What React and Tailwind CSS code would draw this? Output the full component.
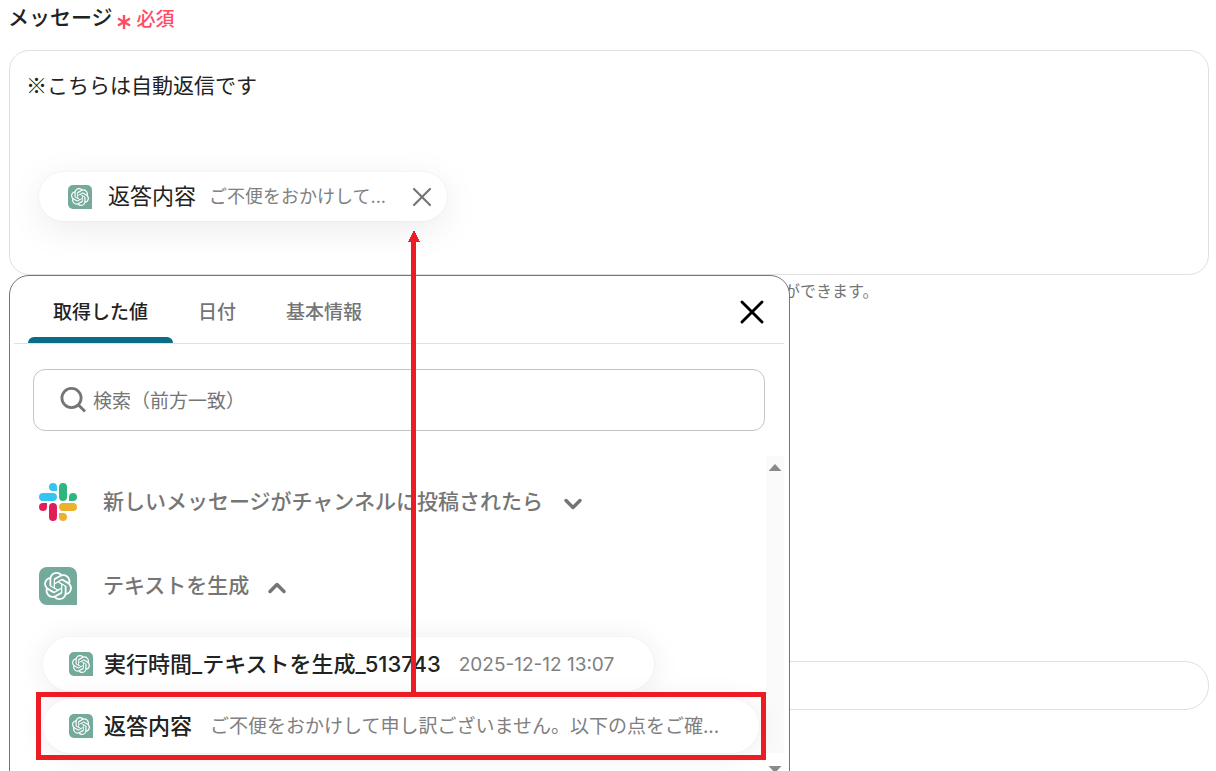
import { SiOpenai } from "react-icons/si";
import { ChevronDown, ChevronUp, X } from "lucide-react";

const tabs = ["取得した値", "日付", "基本情報"];

function OpenAiBadge({ large }) {
  return (
    <span
      className={
        large
          ? "flex size-[38px] shrink-0 items-center justify-center rounded-lg rounded-br-none bg-[#74aa9c] text-white"
          : "flex size-6 shrink-0 items-center justify-center rounded-[5px] rounded-br-none bg-[#74aa9c] text-white"
      }
    >
      <SiOpenai size={large ? 28 : 18} />
    </span>
  );
}

function SlackLogo() {
  return (
    <svg viewBox="0 0 24 24" className="size-[38px] shrink-0" aria-hidden="true">
      <path
        fill="#E01E5A"
        d="M5.042 15.165a2.528 2.528 0 0 1-2.52 2.523A2.528 2.528 0 0 1 0 15.165a2.527 2.527 0 0 1 2.522-2.52h2.52v2.52zM6.313 15.165a2.527 2.527 0 0 1 2.521-2.52 2.527 2.527 0 0 1 2.521 2.52v6.313A2.528 2.528 0 0 1 8.834 24a2.528 2.528 0 0 1-2.521-2.522v-6.313z"
      />
      <path
        fill="#36C5F0"
        d="M8.834 5.042a2.528 2.528 0 0 1-2.521-2.52A2.528 2.528 0 0 1 8.834 0a2.528 2.528 0 0 1 2.521 2.522v2.52H8.834zM8.834 6.313a2.528 2.528 0 0 1 2.521 2.521 2.528 2.528 0 0 1-2.521 2.521H2.522A2.528 2.528 0 0 1 0 8.834a2.528 2.528 0 0 1 2.522-2.521h6.312z"
      />
      <path
        fill="#2EB67D"
        d="M18.956 8.834a2.528 2.528 0 0 1 2.522-2.521A2.528 2.528 0 0 1 24 8.834a2.528 2.528 0 0 1-2.522 2.521h-2.522V8.834zM17.688 8.834a2.528 2.528 0 0 1-2.523 2.521 2.527 2.527 0 0 1-2.52-2.521V2.522A2.527 2.527 0 0 1 15.165 0a2.528 2.528 0 0 1 2.523 2.522v6.312z"
      />
      <path
        fill="#ECB22E"
        d="M15.165 18.956a2.528 2.528 0 0 1 2.523 2.522A2.528 2.528 0 0 1 15.165 24a2.527 2.527 0 0 1-2.52-2.522v-2.522h2.52zM15.165 17.688a2.527 2.527 0 0 1-2.52-2.523 2.526 2.526 0 0 1 2.52-2.52h6.313A2.527 2.527 0 0 1 24 15.165a2.528 2.528 0 0 1-2.522 2.523h-6.313z"
      />
    </svg>
  );
}

function OutputChip({ name, value }) {
  return (
    <button className="flex h-[54px] items-center rounded-full bg-white pr-10 pl-[26px] shadow-[0_2px_30px_rgba(0,0,0,0.08),0_0_2px_rgba(0,0,0,0.06)]">
      <OpenAiBadge />
      <span className="ml-[11px] text-[22px] font-medium text-[#222]">{name}</span>
      <span className="ml-[18px] pt-0.5 text-[19px] text-[#808080]">{value}</span>
    </button>
  );
}

// Red frame and arrow pointing from the picked value to the editor
function Callout() {
  return (
    <div className="pointer-events-none absolute -inset-[7px] border-5 border-[#ed1c24]">
      <svg
        viewBox="0 0 12 467"
        className="absolute bottom-full left-[367px] h-[467px] w-3"
        fill="#ed1c24"
        shapeRendering="crispEdges"
        aria-hidden="true"
      >
        <path d="M6 0 12 12H0z" />
        <path d="M3 11h5v456H3z" />
      </svg>
    </div>
  );
}

function ValuePicker() {
  return (
    <div className="absolute top-full left-[-1px] mt-px w-[781px] rounded-[20px] border border-[#757575] bg-white pr-[5px] pb-10 pl-1">
      <div className="flex h-[68px] items-stretch border-b border-[#e0e0e0] pl-[14px]">
        <div role="tablist" className="flex">
          {tabs.map((tab, i) => (
            <button
              key={tab}
              role="tab"
              aria-selected={i === 0}
              className={
                i === 0
                  ? "relative px-[25px] pt-2 text-[19px] font-medium text-[#222]"
                  : "px-[25px] pt-2 text-[19px] font-medium text-[#757575]"
              }
            >
              {tab}
              {i === 0 && (
                <span className="absolute inset-x-0 bottom-0 h-1.5 rounded-t-md bg-[#0a6c86]" />
              )}
            </button>
          ))}
        </div>
        <button aria-label="閉じる" className="mr-3 ml-auto pt-1 text-black">
          <X size={40} strokeWidth={1.7} />
        </button>
      </div>

      <label className="mx-[19px] mt-[25px] flex h-[62px] items-center rounded-xl border border-[#c4c4c4] pl-[26px]">
        <svg
          viewBox="0 0 26 26"
          className="size-[26px]"
          fill="none"
          stroke="#757575"
          strokeWidth="2.8"
          aria-hidden="true"
        >
          <circle cx="11.5" cy="11" r="9.6" />
          <path d="M18 17.5 25 24.5" />
        </svg>
        <input
          type="search"
          aria-label="検索"
          placeholder="検索（前方一致）"
          className="ml-[7px] flex-1 pt-1 text-[19px] outline-none placeholder:text-[#757575]"
        />
      </label>

      <div className="mt-[25px] flex">
        <div className="min-w-0 flex-1 pt-[27px] pl-[25px]">
          <button className="flex items-center text-[21px] font-medium text-[#757575]">
            <SlackLogo />
            <span className="ml-[26px]">新しいメッセージがチャンネルに投稿されたら</span>
            <ChevronDown size={28} strokeWidth={3} className="mt-1 ml-4" />
          </button>
          <button className="mt-[46px] flex items-center text-[21px] font-medium text-[#757575]">
            <OpenAiBadge large />
            <span className="ml-[26px]">テキストを生成</span>
            <ChevronUp size={28} strokeWidth={3} className="mt-1 ml-3.5" />
          </button>
          <div className="mt-8 ml-1 flex flex-col items-start gap-2">
            <OutputChip name="実行時間_テキストを生成_513743" value="2025-12-12 13:07" />
            <div className="relative">
              <OutputChip
                name="返答内容"
                value="ご不便をおかけして申し訳ございません。以下の点をご確..."
              />
              <Callout />
            </div>
          </div>
        </div>
        <div className="flex w-[18px] flex-col items-center justify-between bg-[#fafafa] pt-2">
          <span className="h-[7px] w-[13px] bg-[#8a8a8a] [clip-path:polygon(50%_0,100%_100%,0_100%)]" />
          <span className="-mb-5 h-[7px] w-[13px] bg-[#8a8a8a] [clip-path:polygon(0_0,100%_0,50%_100%)]" />
        </div>
      </div>
    </div>
  );
}

export default function App() {
  return (
    <main className="h-screen overflow-hidden bg-white pr-[7px] pl-2 font-['Inter','Noto_Sans_CJK_JP',sans-serif] whitespace-nowrap">
      <div className="flex h-[50px] items-start gap-1 pt-1">
        <h2 className="text-[21px] leading-7 font-medium text-[#222]">メッセージ</h2>
        <span className="flex items-center gap-1.5 text-[19px] leading-8 font-medium text-[#ff4d63]">
          <svg
            viewBox="0 0 14 16"
            className="mt-1 h-4 w-3.5"
            stroke="currentColor"
            strokeWidth="2.4"
            aria-hidden="true"
          >
            <path d="M7 1v14M1 4.5l12 7M13 4.5l-12 7" />
          </svg>
          必須
        </span>
      </div>

      <div className="relative ml-px h-[225px] rounded-[20px] border border-[#e0e0e0] px-4 pt-[18px]">
        <p className="font-['Noto_Sans_CJK_JP',sans-serif] text-[21px] leading-[30px] text-[#222]">
          ※こちらは自動返信です
        </p>
        <div className="mt-[73px] ml-[13px] inline-flex h-[49px] items-center rounded-full bg-white pr-[9px] pl-[29px] shadow-[0_8px_36px_rgba(0,0,0,0.08),0_0_2px_rgba(0,0,0,0.08)]">
          <OpenAiBadge />
          <span className="ml-4 text-[22px] text-[#222]">返答内容</span>
          <span className="ml-[13px] text-[18px] text-[#808080]">ご不便をおかけして...</span>
          <button aria-label="削除" className="ml-5 text-[#757575]">
            <X size={32} strokeWidth={1.6} />
          </button>
        </div>
        <ValuePicker />
      </div>

      <p className="mt-1 pl-[776px] text-[16px] leading-6 text-[#757575]">ができます。</p>
      <div className="mt-[358px] pl-px">
        <input
          type="text"
          aria-label="値"
          className="block h-[49px] w-full rounded-3xl border border-[#e0e0e0] px-5 text-[19px]"
        />
      </div>
    </main>
  );
}
